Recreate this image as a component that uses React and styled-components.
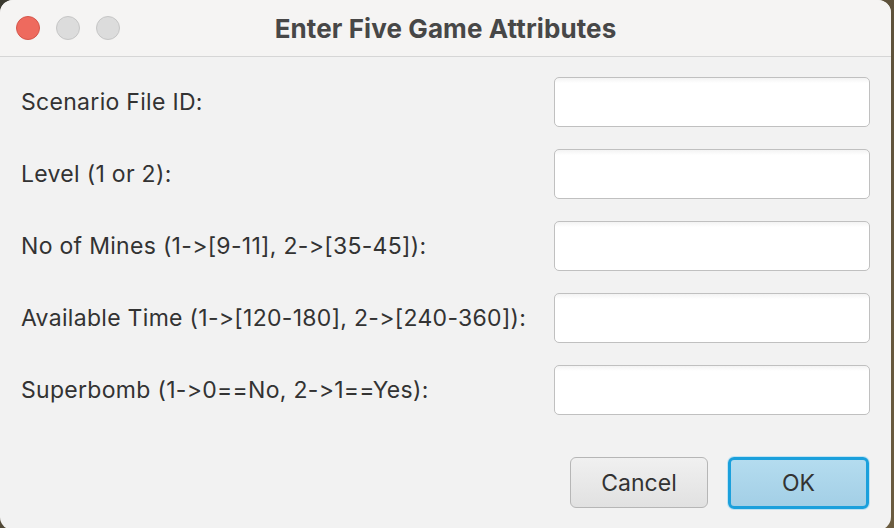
import React from "react";
import styled, { createGlobalStyle } from "styled-components";

const Global = createGlobalStyle`
  html, body { margin: 0; padding: 0; }
  body {
    width: 894px;
    height: 528px;
    overflow: hidden;
    background: #4a4333;
    font-family: Inter, "Noto Sans", "Liberation Sans", sans-serif;
  }
`;

const Desktop = styled.div`
  width: 894px;
  height: 528px;
  background: linear-gradient(135deg, #3b3a30 0%, #5a4f3a 50%, #6b5c40 100%);
  display: flex;
  align-items: flex-start;
`;

const Window = styled.div`
  width: 891px;
  height: 530px;
  background: #f2f2f2;
  border-radius: 13px;
  overflow: hidden;
  display: flex;
  flex-direction: column;
`;

const TitleBar = styled.div`
  height: 56px;
  flex: none;
  background: #f5f4f3;
  border-bottom: 1px solid #d6d6d6;
  display: flex;
  align-items: center;
  position: relative;
  padding-left: 16px;
`;

const Lights = styled.div`
  display: flex;
  gap: 16px;
`;

const Light = styled.span`
  width: 22px;
  height: 22px;
  border-radius: 50%;
  background: ${(p) => (p.$red ? "#ee6a5e" : "#dcdcdc")};
  border: 1px solid ${(p) => (p.$red ? "#d5564b" : "#c6c6c6")};
`;

const Title = styled.div`
  position: absolute;
  left: 0;
  right: 0;
  top: 0;
  bottom: 0;
  display: flex;
  align-items: center;
  justify-content: center;
  font-size: 26px;
  font-weight: 700;
  letter-spacing: 0.1px;
  color: #474747;
  pointer-events: none;
`;

const Body = styled.div`
  flex: 1;
  display: flex;
  flex-direction: column;
  padding: 19px 21px 0 21px;
`;

const Form = styled.div`
  display: flex;
  flex-direction: column;
  gap: 21px;
`;

const Row = styled.div`
  display: flex;
  align-items: center;
  justify-content: space-between;
  height: 51px;
`;

const Label = styled.span`
  font-size: 23px;
  color: #333333;
  letter-spacing: 0.3px;
`;

const Field = styled.div`
  width: 314px;
  height: 48px;
  border: 1.5px solid #c0c0c0;
  border-radius: 5px;
  background: linear-gradient(#f3f3f3 0px, #ffffff 5px, #ffffff 100%);
  margin-right: 0.5px;
`;

const Buttons = styled.div`
  display: flex;
  justify-content: flex-end;
  gap: 20px;
  margin-top: 42px;
  padding-right: 1px;
`;

const Button = styled.div`
  width: ${(p) => (p.$primary ? "135px" : "136px")};
  height: ${(p) => (p.$primary ? "46px" : "49px")};
  border-radius: 6px;
  display: flex;
  align-items: center;
  justify-content: center;
  font-size: 23px;
  color: #333;
  border: ${(p) => (p.$primary ? "3px solid #1ba0dc" : "1.5px solid #b6b6b6")};
  background: ${(p) =>
    p.$primary
      ? "linear-gradient(#b4dcef, #a3cfe6)"
      : "linear-gradient(#f0f0f0, #e1e1e1)"};
  box-shadow: ${(p) => (p.$primary ? "0 0 0 1px #bfe3f3" : "none")};
`;

const fields = [
  "Scenario File ID:",
  "Level (1 or 2):",
  "No of Mines (1->[9-11], 2->[35-45]):",
  "Available Time (1->[120-180], 2->[240-360]):",
  "Superbomb (1->0==No, 2->1==Yes):",
];

export default function App() {
  return (
    <>
      <Global />
      <Desktop>
        <Window>
          <TitleBar>
            <Lights>
              <Light $red />
              <Light />
              <Light />
            </Lights>
            <Title>Enter Five Game Attributes</Title>
          </TitleBar>
          <Body>
            <Form>
              {fields.map((f) => (
                <Row key={f}>
                  <Label>{f}</Label>
                  <Field />
                </Row>
              ))}
            </Form>
            <Buttons>
              <Button>Cancel</Button>
              <Button $primary>OK</Button>
            </Buttons>
          </Body>
        </Window>
      </Desktop>
    </>
  );
}
